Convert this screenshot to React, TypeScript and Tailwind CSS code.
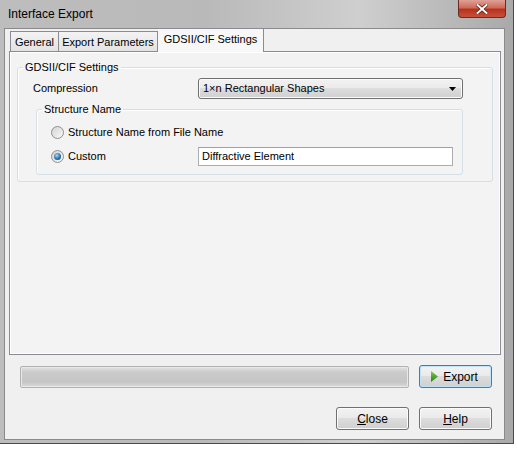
import React from 'react';

function Radio({ checked = false }: { checked?: boolean }) {
  return (
    <div className="w-[13px] h-[13px] rounded-full border border-[#8e8f8f] bg-[linear-gradient(135deg,#d4d4d4,#f8f8f8)] flex items-center justify-center shrink-0">
      {checked && (
        <div className="w-[7px] h-[7px] rounded-full bg-[radial-gradient(circle_at_40%_35%,#a8d8f8,#2a72ad_55%,#0d3f6d)]" />
      )}
    </div>
  );
}

function WinButton({ children, isDefault = false }: { children: React.ReactNode; isDefault?: boolean }) {
  const border = isDefault
    ? 'border-[#3c7fb1] shadow-[inset_0_0_0_1px_#bfe3f8]'
    : 'border-[#707070] shadow-[inset_0_0_0_1px_#fbfbfb]';
  return (
    <div
      className={`h-[23px] w-[73px] rounded-[3px] border ${border} bg-[linear-gradient(#f2f2f2,#ebebeb_45%,#dddddd_50%,#cfcfcf)] flex items-center justify-center text-black`}
    >
      {children}
    </div>
  );
}

export default function App() {
  return (
    <div className="w-[517px] h-[452px] bg-white font-['Liberation_Sans',Arial,sans-serif] text-[11px] text-black leading-none whitespace-nowrap">
      {/* Window */}
      <div className="w-[514px] h-[444px] flex flex-col bg-[linear-gradient(90deg,#bdbdbd,#b9b9b9_40%,#cfcfcf_70%,#a9a9a9)] border-r border-b border-[#4a4a4a]">
        {/* Title bar */}
        <div className="h-[28px] flex items-start justify-between shrink-0">
          <div className="pl-[8px] pt-[8px] text-[12px] text-black">Interface Export</div>
          <div className="mr-[7px] w-[48px] h-[18px] rounded-b-[4px] border border-t-0 border-[#6b2a22] bg-[linear-gradient(#e0a197,#cf6b5a_45%,#b8321b_55%,#c4513c)] flex items-center justify-center">
            <svg width="12" height="10" viewBox="0 0 12 10">
              <path d="M1.5 1 L10.5 9 M10.5 1 L1.5 9" stroke="#5a1a10" strokeWidth="3.4" strokeLinecap="square" />
              <path d="M1.5 1 L10.5 9 M10.5 1 L1.5 9" stroke="#ffffff" strokeWidth="2" strokeLinecap="square" />
            </svg>
          </div>
        </div>

        {/* Client area */}
        <div className="flex-1 ml-[4px] mr-[8px] mb-[3px] border border-[#8a8a8a] bg-[#f0f0f0] flex flex-col">
          {/* Tabs */}
          <div className="h-[22px] flex items-end ml-[4px] shrink-0">
            <div className="h-[20px] w-[49px] ml-[1px] border border-b-0 border-[#898c95] bg-[linear-gradient(#f3f3f3,#e3e3e3)] flex items-center justify-center pt-[1px]">
              General
            </div>
            <div className="h-[20px] w-[99px] border border-l-0 border-b-0 border-[#898c95] bg-[linear-gradient(#f3f3f3,#e3e3e3)] flex items-center justify-center pt-[1px]">
              Export Parameters
            </div>
            <div className="relative z-10 -mb-px h-[24px] w-[106px] border border-l-0 border-b-0 border-[#898c95] bg-[#f7f7f7] flex items-center justify-center pb-[2px]">
              GDSII/CIF Settings
            </div>
          </div>

          {/* Tab page */}
          <div className="ml-[4px] mr-[3px] h-[304px] border border-[#898c95] bg-[#f3f3f3] shadow-[inset_1px_1px_0_#ffffff,inset_-1px_-1px_0_#ffffff] shrink-0 px-[7px] pt-[8px]">
            <fieldset className="h-[122px] border border-[#d5dfe5] rounded-[3px] shadow-[inset_1px_1px_0_#ffffff]">
              <legend className="ml-[5px] px-[2px] leading-[14px]">GDSII/CIF Settings</legend>
              <div className="pl-[15px] pr-[29px]">
                <div className="flex items-center h-[21px] mt-[4px]">
                  <div className="w-[165px]">Compression</div>
                  <div className="flex-1 h-[21px] rounded-[3px] border border-[#707070] bg-[linear-gradient(#f2f2f2,#ebebeb_45%,#dddddd_50%,#cfcfcf)] shadow-[inset_0_0_0_1px_#fbfbfb] flex items-center justify-between pl-[4px] pr-[6px]">
                    <span>1×n Rectangular Shapes</span>
                    <svg width="7" height="4" viewBox="0 0 7 4">
                      <path d="M0 0 H7 L3.5 4 Z" fill="#000" />
                    </svg>
                  </div>
                </div>

                <fieldset className="mt-[3px] ml-[3px] h-[73px] border border-[#d5dfe5] rounded-[3px] shadow-[inset_1px_1px_0_#ffffff]">
                  <legend className="ml-[5px] px-[2px] leading-[14px]">Structure Name</legend>
                  <div className="pl-[14px] pr-[9px]">
                    <div className="flex items-center h-[16px] mt-[8px] gap-[4px]">
                      <Radio />
                      <span>Structure Name from File Name</span>
                    </div>
                    <div className="flex items-center h-[20px] mt-[6px]">
                      <Radio checked />
                      <span className="ml-[4px] w-[130px]">Custom</span>
                      <div className="flex-1 h-[19px] border border-[#abadb3] border-t-[#a0a0a0] bg-white flex items-center pl-[3px]">
                        Diffractive Element
                      </div>
                    </div>
                  </div>
                </fieldset>
              </div>
            </fieldset>
          </div>

          {/* Progress + Export */}
          <div className="flex items-center mt-[10px] ml-[15px] mr-[12px] h-[23px] gap-[10px] shrink-0">
            <div className="flex-1 h-[22px] rounded-[2px] border border-[#b2b2b2] bg-[linear-gradient(#e4e4e4,#cbcbcb_25%,#c6c6c6_75%,#dadada)] shadow-[inset_0_0_0_1px_#e8e8e8]" />
            <WinButton isDefault>
              <div className="flex items-center gap-[5px] pr-[2px]">
                <svg width="7" height="11" viewBox="0 0 7 11">
                  <defs>
                    <linearGradient id="g" x1="0" y1="0" x2="0" y2="1">
                      <stop offset="0" stopColor="#7fcf4f" />
                      <stop offset="1" stopColor="#2b7d12" />
                    </linearGradient>
                  </defs>
                  <path d="M0 0 L7 5.5 L0 11 Z" fill="url(#g)" />
                </svg>
                <span className="text-[12px]">Export</span>
              </div>
            </WinButton>
          </div>

          {/* Close / Help */}
          <div className="flex justify-end mt-[19px] mr-[12px] gap-[10px] shrink-0">
            <WinButton>
              <span className="text-[12px]">
                <span className="underline">C</span>lose
              </span>
            </WinButton>
            <WinButton>
              <span className="text-[12px]">
                <span className="underline">H</span>elp
              </span>
            </WinButton>
          </div>
        </div>
      </div>
    </div>
  );
}
